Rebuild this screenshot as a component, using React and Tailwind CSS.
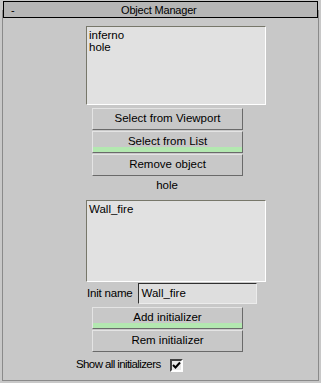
import React from 'react';

const font = { fontFamily: '"Liberation Sans", Arial, sans-serif' };

const Btn = ({ label, active }) => (
  <div className="relative ml-[6px] mt-px w-[151px] h-[22px] border border-t-[#e4e4e4] border-l-[#e4e4e4] border-b-[#6a6a6a] border-r-[#6a6a6a] bg-[#c8c8c8] flex items-start justify-center">
    <span className="mt-[3px] text-[11.5px] leading-[13px] text-black">{label}</span>
    {active && <div className="absolute left-0 right-0 bottom-0 h-[5px] bg-[#b3e8b0]" />}
  </div>
);

const ListBox = ({ items, h }) => (
  <div className={`w-[180px] ${h} border border-t-[#77776a] border-l-[#77776a] border-b-white border-r-white bg-[#e1e1e1] px-[2px] pt-[2px]`}>
    {items.map((t) => (
      <div key={t} className="text-[11.5px] leading-[12px] text-black">{t}</div>
    ))}
  </div>
);

export default function App() {
  return (
    <div className="w-[321px] h-[383px] bg-[#c8c8c8] overflow-hidden" style={font}>
      <div className="relative z-10 mx-[3px] mt-px h-[17px] border border-black bg-[#b6b6b6] flex items-center">
        <span className="ml-[7px] text-[11px] leading-[12px] text-black">-</span>
        <span className="flex-1 text-center pr-[14px] text-[11px] tracking-[-0.2px] leading-[12px] text-black">Object Manager</span>
      </div>
      <div className="-mt-[8px] ml-[2px] w-[317px] h-[371px] border-l border-r border-b border-[#8a8a8a]">
        <div className="pl-[83px] pt-[16px]">
          <ListBox items={['inferno', 'hole']} h="h-[79px]" />
          <div className="h-[2px]" />
          <Btn label="Select from Viewport" />
          <Btn label="Select from List" active />
          <Btn label="Remove object" />
          <div className="w-[162px] mt-[3px] text-center text-[11.5px] leading-[13px] text-black">hole</div>
          <div className="h-[8px]" />
          <ListBox items={['Wall_fire']} h="h-[82px]" />
          <div className="flex items-center mt-[1px] h-[21px]">
            <span className="ml-[1px] text-[11.5px] tracking-[-0.2px] leading-[13px] text-black">Init name</span>
            <div className="ml-[5px] w-[119px] h-[21px] border border-t-[#303030] border-l-[#303030] border-b-[#ececec] border-r-[#ececec] bg-[#dedede] pl-[3px] pt-[2px] text-[11.5px] leading-[14px] text-black">
              Wall_fire
            </div>
          </div>
          <div className="h-[2px]" />
          <Btn label="Add initializer" active />
          <Btn label="Rem initializer" />
          <div className="flex items-center -ml-[10px] mt-[4px]">
            <span className="text-[11.5px] tracking-[-0.6px] leading-[13px] text-black">Show all initializers</span>
            <div className="ml-[9px] mt-[3px] w-[13px] h-[13px] border-2 border-t-[#404040] border-l-[#404040] border-b-white border-r-white bg-[#e8e8e8] flex items-center justify-center">
              <svg width="9" height="9" viewBox="0 0 9 9">
                <path d="M1 4 L3.5 6.5 L8 1.5" stroke="black" strokeWidth="2" fill="none" />
              </svg>
            </div>
          </div>
        </div>
      </div>
    </div>
  );
}
